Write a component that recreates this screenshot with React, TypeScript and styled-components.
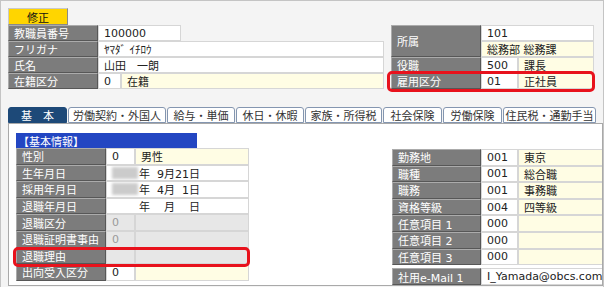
import styled, { createGlobalStyle } from "styled-components";

const GlobalStyle = createGlobalStyle`
  body {
    margin: 0;
    font-family: "DejaVu Sans", "Noto Sans CJK JP", sans-serif;
  }
`;

const Screen = styled.div`
  width: 604px;
  height: 287px;
  box-sizing: border-box;
  border: 1px solid #c4c4c4;
  border-bottom: none;
  background: #f4f4f4;
  padding: 7px 0 0 7px;
  overflow: hidden;
  font-size: 11px;
  color: #222;
`;

const EditButton = styled.div`
  width: 60px;
  height: 17px;
  box-sizing: border-box;
  background: #ffd500;
  border: 1px solid;
  border-color: #c9c9c9 #8a8a8a #8a8a8a #c9c9c9;
  display: flex;
  align-items: center;
  justify-content: center;
  font-size: 11px;
  color: #111;
`;

const Header = styled.div`
  display: flex;
  gap: 7px;
`;

const Form = styled.div<{ $w: number }>`
  display: flex;
  flex-direction: column;
  width: ${(p) => p.$w}px;
`;

const Row = styled.div<{ $h?: number }>`
  position: relative;
  display: flex;
  height: ${(p) => p.$h ?? 16}px;
`;

const Stack = styled.div`
  display: flex;
  flex-direction: column;
`;

const Label = styled.div<{ $w: number }>`
  width: ${(p) => p.$w}px;
  flex: none;
  box-sizing: border-box;
  background: #7c7c7c;
  border: 1px solid;
  border-color: #ababab #575757 #575757 #ababab;
  color: #fff;
  padding-left: 5px;
  display: flex;
  align-items: center;
  white-space: nowrap;
  overflow: hidden;
`;

const tones = {
  white: { bg: "#ffffff", fg: "#222" },
  yellow: { bg: "#fffde4", fg: "#222" },
  off: { bg: "#e7e7e7", fg: "#9a9a9a" },
};

const Field = styled.div<{ $w: number; $tone?: keyof typeof tones }>`
  width: ${(p) => p.$w}px;
  flex: none;
  box-sizing: border-box;
  background: ${(p) => tones[p.$tone ?? "white"].bg};
  color: ${(p) => tones[p.$tone ?? "white"].fg};
  border: 1px solid #d6d6d6;
  padding-left: 5px;
  display: flex;
  align-items: center;
  white-space: nowrap;
  overflow: hidden;
`;

const Highlight = styled.div<{ $inset: string }>`
  position: absolute;
  inset: ${(p) => p.$inset};
  border: 3px solid #e8121c;
  border-radius: 5px;
  pointer-events: none;
  z-index: 2;
`;

const Tabs = styled.div`
  display: flex;
  gap: 1px;
  margin-top: 18px;
  height: 16px;
`;

const Tab = styled.div<{ $w: number; $active?: boolean }>`
  width: ${(p) => p.$w}px;
  box-sizing: border-box;
  border: 1px solid ${(p) => (p.$active ? "#1d4978" : "#8496b0")};
  border-radius: 3px 3px 0 0;
  background: ${(p) => (p.$active ? "#1d4978" : "#ffffff")};
  color: ${(p) => (p.$active ? "#ffffff" : "#333")};
  display: flex;
  align-items: center;
  justify-content: center;
  white-space: nowrap;
`;

const Panel = styled.div`
  width: 595px;
  height: 163px;
  box-sizing: border-box;
  border: 1px solid #a9a9a9;
  background: #fff;
  padding: 9px 0 0 7px;
  display: flex;
  overflow: hidden;
`;

const Column = styled.div<{ $w: number; $top?: number; $left?: number }>`
  flex: none;
  width: ${(p) => p.$w}px;
  margin-top: ${(p) => p.$top ?? 0}px;
  margin-left: ${(p) => p.$left ?? 0}px;
  display: flex;
  flex-direction: column;
`;

const SectionTitle = styled.div`
  width: 181px;
  height: 15px;
  background: #2346c2;
  color: #fff;
  padding-left: 2px;
  display: flex;
  align-items: center;
  box-sizing: border-box;
`;

const Masked = styled.span<{ $blank?: boolean }>`
  display: inline-block;
  width: 26px;
  height: 12px;
  margin-right: 1px;
  background: ${(p) => (p.$blank ? "transparent" : "#cbcbcb")};
  filter: blur(1.5px);
`;

const Spacer = styled.div<{ $h: number }>`
  height: ${(p) => p.$h}px;
`;

const tabs = [
  { name: "基　本", w: 59, active: true },
  { name: "労働契約・外国人", w: 98 },
  { name: "給与・単価", w: 68 },
  { name: "休日・休暇", w: 68 },
  { name: "家族・所得税", w: 77 },
  { name: "社会保険", w: 59 },
  { name: "労働保険", w: 59 },
  { name: "住民税・通勤手当", w: 93 },
];

const RH = 16.6;

const rightRows = [
  ["勤務地", "001", "東京"],
  ["職種", "001", "総合職"],
  ["職務", "001", "事務職"],
  ["資格等級", "004", "四等級"],
  ["任意項目 1", "000", ""],
  ["任意項目 2", "000", ""],
  ["任意項目 3", "000", ""],
];

export default function App() {
  return (
    <>
      <GlobalStyle />
      <Screen>
        <EditButton>修正</EditButton>
        <Header>
          <Form $w={376}>
            <Row>
              <Label $w={90}>教職員番号</Label>
              <Field $w={83}>100000</Field>
            </Row>
            <Row>
              <Label $w={90}>フリガナ</Label>
              <Field $w={286}>ﾔﾏﾀﾞ ｲﾁﾛｳ</Field>
            </Row>
            <Row>
              <Label $w={90}>氏名</Label>
              <Field $w={286}>山田　一朗</Field>
            </Row>
            <Row>
              <Label $w={90}>在籍区分</Label>
              <Field $w={23}>0</Field>
              <Field $w={263} $tone="yellow">在籍</Field>
            </Row>
          </Form>
          <Form $w={203}>
            <Row $h={32}>
              <Label $w={90}>所属</Label>
              <Stack>
                <Field $w={113} style={{ height: 16 }}>101</Field>
                <Field $w={113} $tone="yellow" style={{ height: 16 }}>
                  総務部 総務課
                </Field>
              </Stack>
            </Row>
            <Row>
              <Label $w={90}>役職</Label>
              <Field $w={37}>500</Field>
              <Field $w={76} $tone="yellow">課長</Field>
            </Row>
            <Row>
              <Label $w={90}>雇用区分</Label>
              <Field $w={37}>01</Field>
              <Field $w={76} $tone="yellow">正社員</Field>
              <Highlight $inset="-2px -1px -3px -4px" />
            </Row>
          </Form>
        </Header>

        <Tabs>
          {tabs.map((t) => (
            <Tab key={t.name} $w={t.w} $active={t.active}>
              {t.name}
            </Tab>
          ))}
        </Tabs>

        <Panel>
          <Column $w={233}>
            <SectionTitle>【基本情報】</SectionTitle>
            <Row $h={RH}>
              <Label $w={90}>性別</Label>
              <Field $w={29}>0</Field>
              <Field $w={114} $tone="yellow">男性</Field>
            </Row>
            <Row $h={RH}>
              <Label $w={90}>生年月日</Label>
              <Field $w={143}>
                <Masked />年&nbsp;&nbsp;9月21日
              </Field>
            </Row>
            <Row $h={RH}>
              <Label $w={90}>採用年月日</Label>
              <Field $w={143}>
                <Masked />年&nbsp;&nbsp;4月&nbsp;&nbsp;1日
              </Field>
            </Row>
            <Row $h={RH}>
              <Label $w={90}>退職年月日</Label>
              <Field $w={143}>
                <Masked $blank />年&nbsp;&nbsp;&nbsp;&nbsp;月&nbsp;&nbsp;&nbsp;&nbsp;日
              </Field>
            </Row>
            <Row $h={RH}>
              <Label $w={90}>退職区分</Label>
              <Field $w={29} $tone="off">0</Field>
              <Field $w={114} $tone="off" />
            </Row>
            <Row $h={RH}>
              <Label $w={90}>退職証明書事由</Label>
              <Field $w={29} $tone="off">0</Field>
              <Field $w={114} $tone="off" />
            </Row>
            <Row $h={RH}>
              <Label $w={90}>退職理由</Label>
              <Field $w={29} $tone="off" />
              <Field $w={114} $tone="off" />
              <Highlight $inset="-1px -1px -3px -3px" />
            </Row>
            <Row $h={RH}>
              <Label $w={90}>出向受入区分</Label>
              <Field $w={29}>0</Field>
              <Field $w={114} $tone="yellow" />
            </Row>
          </Column>

          <Column $w={240} $top={16} $left={143}>
            {rightRows.map(([label, code, name]) => (
              <Row $h={RH} key={label}>
                <Label $w={89}>{label}</Label>
                <Field $w={37}>{code}</Field>
                <Field $w={114} $tone="yellow">{name}</Field>
              </Row>
            ))}
            <Spacer $h={14} />
            <Row $h={RH}>
              <Label $w={89}>社用e-Mail 1</Label>
              <Field $w={151}>I_Yamada@obcs.com</Field>
            </Row>
          </Column>
        </Panel>
      </Screen>
    </>
  );
}
